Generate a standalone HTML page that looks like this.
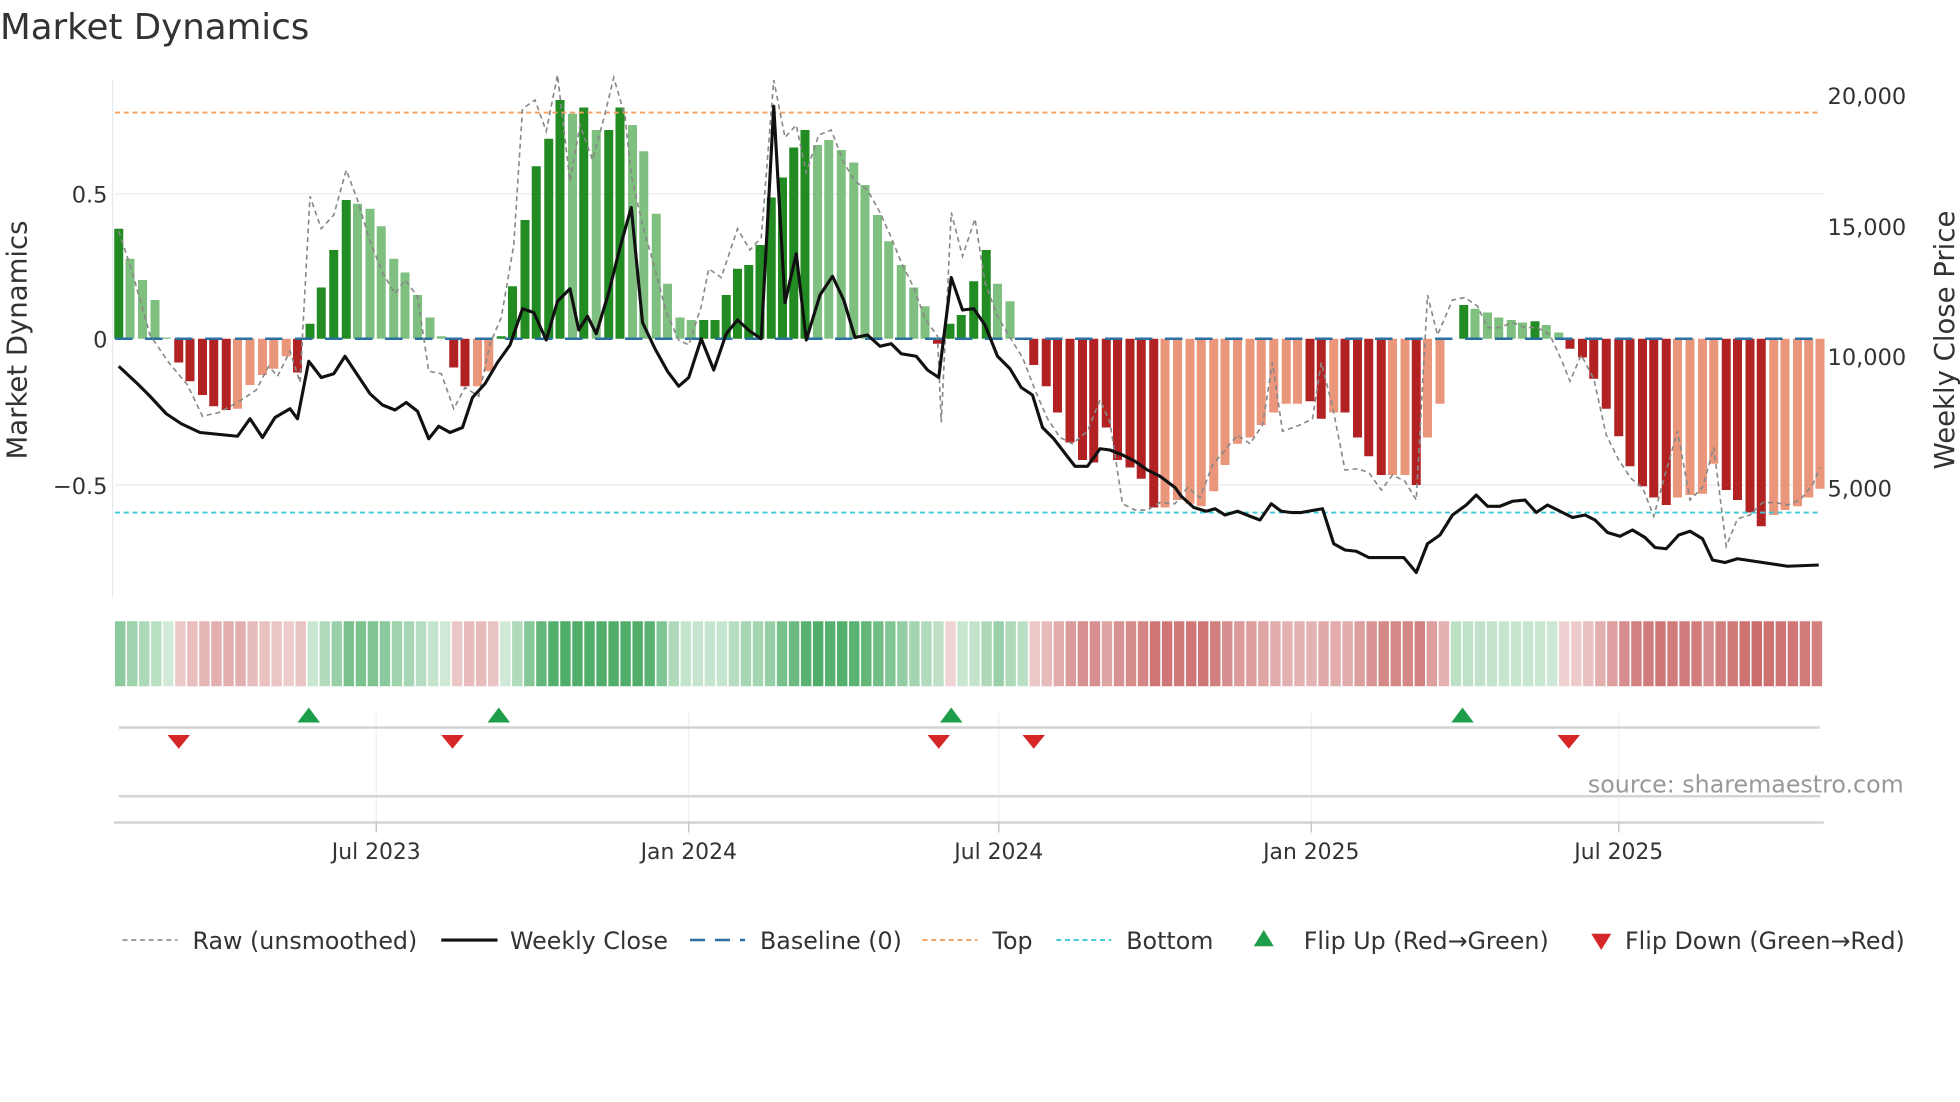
<!DOCTYPE html>
<html><head><meta charset="utf-8"><style>
html,body{margin:0;padding:0;background:#fff;width:1960px;height:1102px;overflow:hidden}
svg{display:block}
text{font-family:"DejaVu Sans","Liberation Sans",sans-serif;fill:#333}
</style></head><body>
<svg id="s" width="1960" height="1102" viewBox="0 0 1568 881.6" xmlns="http://www.w3.org/2000/svg">
<text x="0" y="31" font-size="28.5">Market Dynamics</text>
<line x1="90" y1="64" x2="90" y2="478" stroke="#e6e9ef" stroke-width="1"/>
<line x1="92" y1="155" x2="1459" y2="155" stroke="#eef0f4" stroke-width="1.5"/>
<line x1="92" y1="388" x2="1459" y2="388" stroke="#eef0f4" stroke-width="1.5"/>
<text x="86" y="162" font-size="18" text-anchor="end">0.5</text>
<text x="86" y="278" font-size="18" text-anchor="end">0</text>
<text x="86" y="395" font-size="18" text-anchor="end">−0.5</text>
<text x="1462" y="83" font-size="18">20,000</text>
<text x="1462" y="188" font-size="18">15,000</text>
<text x="1462" y="292" font-size="18">10,000</text>
<text x="1462" y="397" font-size="18">5,000</text>
<text transform="translate(21,272) rotate(-90)" font-size="22" text-anchor="middle">Market Dynamics</text>
<text transform="translate(1563,272) rotate(-90)" font-size="22" text-anchor="middle">Weekly Close Price</text>
<g id="bars"></g>
<line x1="92" y1="90" x2="1456" y2="90" stroke="#f0a060" stroke-width="1.5" stroke-dasharray="4,3"/>
<line x1="92" y1="410" x2="1456" y2="410" stroke="#3cc8d8" stroke-width="1.5" stroke-dasharray="4,3"/>
<line x1="92" y1="271" x2="1456" y2="271" stroke="#2a70a0" stroke-width="2" stroke-dasharray="14,10"/>
<polyline id="raw" fill="none" stroke="#888" stroke-width="1.3" stroke-dasharray="4,3"/>
<polyline id="close" fill="none" stroke="#111" stroke-width="2.5" stroke-linejoin="round"/>
<g id="strip"></g>
<g stroke="#eef0f2" stroke-width="1">
<line x1="301" y1="570" x2="301" y2="658"/><line x1="551" y1="570" x2="551" y2="658"/><line x1="799" y1="570" x2="799" y2="658"/><line x1="1049" y1="570" x2="1049" y2="658"/><line x1="1295" y1="570" x2="1295" y2="658"/>
</g>
<line x1="95" y1="582" x2="1456" y2="582" stroke="#d4d4d4" stroke-width="2"/>
<line x1="95" y1="637" x2="1456" y2="637" stroke="#d4d4d4" stroke-width="2"/>
<line x1="91" y1="658" x2="1459" y2="658" stroke="#d4d4d4" stroke-width="2"/>
<g stroke="#bbb" stroke-width="1"><line x1="301" y1="658" x2="301" y2="666"/><line x1="551" y1="658" x2="551" y2="666"/><line x1="799" y1="658" x2="799" y2="666"/><line x1="1049" y1="658" x2="1049" y2="666"/><line x1="1295" y1="658" x2="1295" y2="666"/></g>
<g id="flips"></g>
<text x="1523" y="634" font-size="19" text-anchor="end" style="fill:#999">source: sharemaestro.com</text>
<g font-size="17.5" text-anchor="middle">
<text x="301" y="687">Jul 2023</text><text x="551" y="687">Jan 2024</text><text x="799" y="687">Jul 2024</text><text x="1049" y="687">Jan 2025</text><text x="1295" y="687">Jul 2025</text>
</g>
<g font-size="19">
<line x1="98" y1="752" x2="142" y2="752" stroke="#888" stroke-width="1.3" stroke-dasharray="4,3"/>
<text x="154" y="759">Raw (unsmoothed)</text>
<line x1="353" y1="752" x2="398" y2="752" stroke="#111" stroke-width="2.5"/>
<text x="408" y="759">Weekly Close</text>
<line x1="552" y1="752" x2="596" y2="752" stroke="#2a70a0" stroke-width="2" stroke-dasharray="12,8"/>
<text x="608" y="759">Baseline (0)</text>
<line x1="738" y1="752" x2="782" y2="752" stroke="#f0a060" stroke-width="1.5" stroke-dasharray="4,3"/>
<text x="794" y="759">Top</text>
<line x1="845" y1="752" x2="889" y2="752" stroke="#3cc8d8" stroke-width="1.5" stroke-dasharray="4,3"/>
<text x="901" y="759">Bottom</text>
<polygon points="1003,757 1019,757 1011,744" fill="#1e9e4a"/>
<text x="1043" y="759">Flip Up (Red→Green)</text>
<polygon points="1273,747 1289,747 1281,760" fill="#d62728"/>
<text x="1300" y="759">Flip Down (Green→Red)</text>
</g>
</svg>
<script>
var B=[[95,183,1],[104,207,0],[114,224,0],[124,240,0],[133,270,0],[143,290,1],[152,305,1],[162,316,1],[171,325,1],[181,328,1],[190,327,0],[200,308,0],[210,300,0],[219,295,0],[229,285,0],[238,298,1],[248,259,1],[257,230,1],[267,200,1],[277,160,1],[286,163,0],[296,167,0],[305,181,0],[315,207,0],[324,218,0],[334,236,0],[344,254,0],[353,269,0],[363,294,1],[372,309,1],[382,309,0],[391,297,0],[401,269,1],[410,229,1],[420,176,1],[429,133,1],[439,111,1],[448,80,1],[458,91,0],[467,86,1],[477,104,0],[487,104,1],[496,86,1],[506,100,0],[515,121,0],[525,171,0],[534,227,0],[544,254,0],[553,256,0],[563,256,1],[572,256,1],[581,236,1],[590,215,1],[599,212,1],[608,196,1],[617,158,1],[626,142,1],[635,118,1],[644,104,1],[654,116,0],[663,112,0],[673,120,0],[683,130,0],[692,148,0],[702,172,0],[711,193,0],[721,212,0],[731,230,0],[740,245,0],[750,275,1],[760,259,1],[769,252,1],[779,225,1],[789,200,1],[798,227,0],[808,241,0],[827,292,1],[837,309,1],[846,330,1],[856,354,1],[866,368,1],[875,370,1],[885,342,1],[894,368,1],[904,374,1],[913,383,1],[923,406,1],[932,406,0],[942,400,0],[952,403,0],[961,405,0],[971,393,0],[980,372,0],[990,355,0],[1000,350,0],[1009,340,0],[1019,330,0],[1029,323,0],[1038,323,0],[1048,321,1],[1057,335,1],[1067,330,0],[1076,330,1],[1086,350,1],[1095,365,1],[1105,380,1],[1114,380,0],[1124,380,0],[1133,388,1],[1142,350,0],[1152,323,0],[1171,244,1],[1180,247,0],[1190,250,0],[1199,254,0],[1209,256,0],[1218,258,0],[1228,257,1],[1237,260,0],[1247,266,0],[1256,279,1],[1266,286,1],[1275,303,1],[1285,327,1],[1295,349,1],[1304,373,1],[1314,389,1],[1323,398,1],[1333,404,1],[1342,398,0],[1352,396,0],[1362,395,0],[1371,371,0],[1381,392,1],[1390,400,1],[1400,410,1],[1409,421,1],[1419,412,0],[1428,408,0],[1438,405,0],[1447,398,0],[1456,391,0]];
var h="";
B.forEach(function(b){var x=b[0],y=b[1],up=y<271;var c=up?(b[2]?"#228b22":"#7fbf7f"):(b[2]?"#b22222":"#e9967a");var t=Math.min(y,271),hh=Math.abs(271-y);h+='<rect x="'+(x-3.6)+'" y="'+t+'" width="7.2" height="'+hh+'" fill="'+c+'"/>';});
document.getElementById("bars").innerHTML=h;
var sh="",w=(1459-92)/B.length;
B.forEach(function(b,i){var v=(271-b[1])/232;var a=Math.min(0.85,0.22+Math.abs(v)*0.9);var c=v>=0?"rgba(50,160,80,"+a+")":"rgba(190,70,70,"+a+")";sh+='<rect x="'+(92+i*w)+'" y="497" width="'+(w-1.3)+'" height="52" fill="'+c+'"/>';});
document.getElementById("strip").innerHTML=sh;
var fl="";[247,399,761,1170].forEach(function(x){fl+='<polygon points="'+(x-9)+',578 '+(x+9)+',578 '+x+',566" fill="#1e9e4a"/>';});
[143,362,751,827,1255].forEach(function(x){fl+='<polygon points="'+(x-9)+',588 '+(x+9)+',588 '+x+',599" fill="#d62728"/>';});
document.getElementById("flips").innerHTML=fl;
document.getElementById("close").setAttribute("points","95,293 110,307 120,317 133,331 145,339 160,346 190,349 200,335 210,350 220,334 232,327 238,335 247,289 257,302 267,299 276,285 286,300 296,315 306,324 316,328 325,322 334,329 343,351 351,341 360,346 370,342 378,318 388,307 398,290 408,276 418,247 427,250 437,272 446,241 456,231 463,264 470,253 477,267 487,234 496,198 505,166 514,258 524,279 534,297 543,309 551,302 561,271 571,296 581,267 590,256 600,265 609,271 619,85 628,242 637,203 645,272 656,236 666,221 675,240 684,270 694,268 704,277 713,275 721,283 733,285 742,296 751,302 761,222 770,248 779,247 788,260 798,285 808,295 817,310 826,316 834,342 843,351 853,364 860,373 870,373 880,359 888,360 898,364 908,369 918,376 928,381 940,390 945,397 955,406 965,409 972,407 980,412 990,409 1000,413 1008,416 1017,403 1025,409 1033,410 1041,410 1052,408 1058,407 1067,435 1076,440 1085,441 1095,446 1123,446 1133,458 1142,435 1152,428 1162,412 1173,404 1181,396 1190,405 1200,405 1210,401 1220,400 1229,410 1238,404 1248,409 1258,414 1268,412 1276,416 1286,426 1296,429 1306,424 1316,430 1324,438 1333,439 1343,428 1352,425 1362,431 1370,448 1380,450 1390,447 1430,453 1455,452");
document.getElementById("raw").setAttribute("points","95,185 105,215 120,268 135,290 150,308 162,333 175,330 190,322 205,312 215,293 222,301 232,281 240,306 248,157 257,183 267,172 277,136 286,160 296,193 306,218 316,235 324,224 334,237 343,297 353,299 363,327 372,310 383,317 392,275 401,254 411,196 418,87 428,80 437,105 446,60 456,145 464,100 474,128 483,95 491,62 500,93 505,140 514,180 524,215 533,250 543,272 551,276 561,245 567,215 577,222 590,183 600,200 609,190 619,64 628,110 637,100 645,138 655,108 665,104 675,130 684,145 694,152 704,170 713,190 721,210 731,230 740,255 750,269 753,338 761,170 770,205 780,175 788,226 798,253 808,270 818,286 828,312 838,335 848,350 858,355 870,345 880,320 888,338 898,403 908,408 918,408 928,402 940,403 950,390 960,398 970,372 980,360 990,348 1000,355 1010,340 1018,290 1026,345 1040,340 1050,335 1057,290 1066,325 1076,376 1086,375 1095,378 1105,392 1114,380 1124,385 1133,400 1142,236 1150,268 1162,240 1172,238 1182,245 1190,262 1200,262 1210,258 1220,262 1230,262 1240,268 1250,290 1256,305 1265,284 1275,303 1285,348 1295,368 1305,383 1314,390 1323,413 1332,380 1342,345 1352,400 1362,390 1371,358 1381,437 1390,415 1400,412 1410,402 1420,402 1430,404 1440,400 1450,388 1456,374");
</script>
</body></html>
